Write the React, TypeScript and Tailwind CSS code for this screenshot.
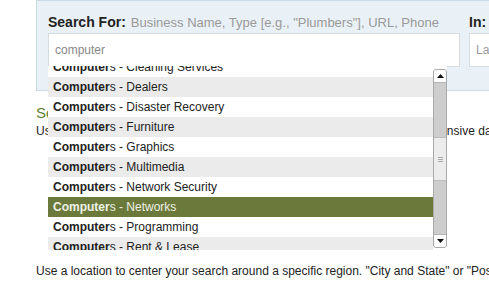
import React from 'react';

const suggestions = [
  'Cleaning Services',
  'Dealers',
  'Disaster Recovery',
  'Furniture',
  'Graphics',
  'Multimedia',
  'Network Security',
  'Networks',
  'Programming',
  'Rent & Lease',
];

const ACTIVE = 'Networks';

// 自动补全下拉框
const SuggestList = () => (
  <div className="absolute left-[48px] top-[66px] w-[399px] h-[184px] bg-white overflow-hidden flex">
    <div className="flex-1 overflow-hidden">
      <ul className="-mt-[9px]">
        {suggestions.map((s, i) => {
          const active = s === ACTIVE;
          const bg = active ? 'bg-[#6b7a3b] text-[#eef0e4]' : i % 2 === 1 ? 'bg-[#ebebeb] text-[#222]' : 'bg-white text-[#222]';
          return (
            <li key={s} className={`h-[20px] leading-[20px] pl-[5px] text-[12px] whitespace-nowrap ${bg}`}>
              <b>Computer</b>s - {s}
            </li>
          );
        })}
      </ul>
    </div>
    {/* 滚动条 */}
    <div className="w-[14px] mt-[3px] mb-[2px] border border-[#a9a9a9] rounded-[3px] flex flex-col bg-[#cdcdcd] overflow-hidden">
      <div className="h-[13px] bg-white flex items-center justify-center border-b border-[#b5b5b5]">
        <svg width="7" height="4" viewBox="0 0 7 4"><path d="M0 4 L3.5 0 L7 4 Z" fill="#111" /></svg>
      </div>
      <div className="h-[54px]" />
      <div className="h-[44px] bg-[#ececec] border-y border-[#bdbdbd] flex items-center justify-center">
        <div className="flex flex-col gap-[1px]">
          <div className="w-[5px] h-px bg-[#aaa]" />
          <div className="w-[5px] h-px bg-[#aaa]" />
          <div className="w-[5px] h-px bg-[#aaa]" />
        </div>
      </div>
      <div className="flex-1" />
      <div className="h-[13px] bg-white flex items-center justify-center border-t border-[#b5b5b5]">
        <svg width="7" height="4" viewBox="0 0 7 4"><path d="M0 0 L3.5 4 L7 0 Z" fill="#111" /></svg>
      </div>
    </div>
  </div>
);

export default function App() {
  return (
    <div
      className="relative w-[489px] h-[302px] overflow-hidden bg-white text-[#222]"
      style={{ fontFamily: '"Liberation Sans", Arial, sans-serif' }}
    >
      {/* 搜索面板 */}
      <div className="ml-[36px] w-[520px] h-[91px] bg-[#eaf1f6] border border-[#cbdbe6] pl-[11px] pt-[11px] flex gap-[9px]">
        <div className="w-[412px] shrink-0">
          <div className="h-[20px] flex items-baseline whitespace-nowrap">
            <span className="text-[14px] font-bold text-[#222]">Search For:</span>
            <span className="ml-[5px] text-[13px] text-[#999]">Business Name, Type [e.g., "Plumbers"], URL, Phone</span>
          </div>
          <div className="mt-[1px] h-[34px] bg-white border border-[#d6dce0] pl-[6px] flex items-center text-[12px] text-[#888]">
            computer
          </div>
        </div>
        <div className="flex-1">
          <div className="h-[20px] text-[14px] font-bold">In:</div>
          <div className="mt-[1px] h-[34px] bg-white border border-[#d6dce0] pl-[6px] flex items-center text-[12px] text-[#999]">
            Last
          </div>
        </div>
      </div>

      <div className="ml-[36px] mt-[13px]">
        <h2 className="text-[15px] leading-[18px] text-[#5f7f2f]">Search Tips</h2>
        <p className="mt-[1px] text-[12px] leading-[16px] whitespace-nowrap">
          Use the search form to find local businesses and services from our comprehensive database
        </p>
        <p className="mt-[124px] text-[12px] leading-[16px] whitespace-nowrap">
          Use a location to center your search around a specific region. "City and State" or "Postal Code" work best.
        </p>
      </div>

      <SuggestList />
    </div>
  );
}
